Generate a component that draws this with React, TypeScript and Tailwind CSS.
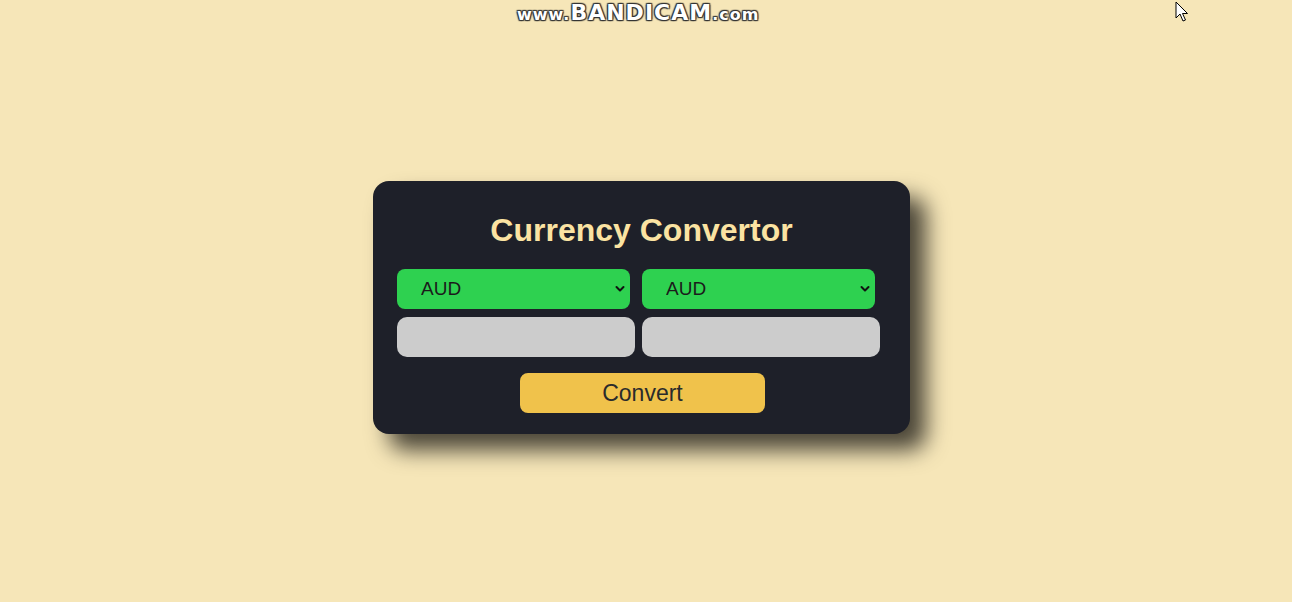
import React, { useState } from 'react';

const currencies = ['AUD', 'USD', 'EUR', 'GBP', 'INR', 'JPY'];

function CurrencySelect({ value, onChange }: { value: string; onChange: (v: string) => void }) {
  return (
    <div className="relative w-[233px] h-10">
      <select
        value={value}
        onChange={(e) => onChange(e.target.value)}
        className="appearance-none w-full h-full rounded-lg bg-[#2ed150] pl-6 text-[19px] text-[#1b1b1b] outline-none"
        style={{ fontFamily: '"Liberation Sans", Arial, sans-serif' }}
      >
        {currencies.map((c) => (
          <option key={c}>{c}</option>
        ))}
      </select>
      {/* chevron drawn over the select */}
      <svg
        className="pointer-events-none absolute right-[5px] top-[16px]"
        width="10"
        height="8"
        viewBox="0 0 10 8"
        fill="none"
      >
        <path d="M1.5 2 L5 5.5 L8.5 2" stroke="#111" strokeWidth="2" strokeLinecap="round" strokeLinejoin="round" />
      </svg>
    </div>
  );
}

export default function App() {
  const [from, setFrom] = useState('AUD');
  const [to, setTo] = useState('AUD');
  const [amount, setAmount] = useState('');
  const [result, setResult] = useState('');

  return (
    <div
      className="relative min-h-[602px] w-full bg-[#f6e6b8] flex justify-center"
      style={{ fontFamily: '"Liberation Sans", Arial, sans-serif' }}
    >
      {/* recorder watermark */}
      <div
        className="absolute -top-1 left-[517px] text-white font-bold tracking-[1px] whitespace-nowrap"
        style={{
          fontFamily: '"DejaVu Sans", sans-serif',
          textShadow: '0 0 2px #333, 1px 1px 1px #333, -1px -1px 1px #333, 1px -1px 1px #333, -1px 1px 1px #333',
        }}
      >
        <span className="text-[16px]">www.</span>
        <span className="text-[22px]">BANDICAM</span>
        <span className="text-[16px]">.com</span>
      </div>

      {/* mouse cursor */}
      <svg className="absolute left-[1175px] top-[1px]" width="14" height="22" viewBox="0 0 14 22">
        <path d="M1 1 L1 17 L5 13 L8 20 L10.5 19 L7.5 12.5 L12.5 12.5 Z" fill="#fff" stroke="#000" strokeWidth="1" strokeLinejoin="round" />
      </svg>

      <div className="mt-[181px] mr-[9px] w-[537px] h-[253px] rounded-2xl bg-[#1e2029] shadow-[16px_16px_22px_rgba(0,0,0,0.7)] pt-[31px] pl-6">
        <h1 className="text-center text-[32px] leading-9 font-bold text-[#fbe3a2] pr-6">Currency Convertor</h1>

        <div className="mt-[21px] flex gap-3">
          <CurrencySelect value={from} onChange={setFrom} />
          <CurrencySelect value={to} onChange={setTo} />
        </div>

        <div className="mt-2 flex gap-[7px]">
          <input
            value={amount}
            onChange={(e) => setAmount(e.target.value)}
            className="w-[238px] h-10 rounded-[10px] bg-[#cccccc] px-3 outline-none"
          />
          <input
            value={result}
            onChange={(e) => setResult(e.target.value)}
            className="w-[238px] h-10 rounded-[10px] bg-[#cccccc] px-3 outline-none"
          />
        </div>

        <div className="mt-4 pl-[123px]">
          <button
            onClick={() => setResult(amount)}
            className="w-[245px] h-10 rounded-lg bg-[#f0c24b] text-[23px] text-[#2b2b2b]"
          >
            Convert
          </button>
        </div>
      </div>
    </div>
  );
}
